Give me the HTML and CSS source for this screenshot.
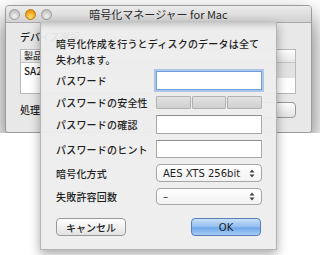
FILE: index.html
```html
<!DOCTYPE html>
<html lang="ja">
  <head>
    <meta charset="UTF-8" />
    <title>暗号化マネージャー for Mac</title>
    <link rel="stylesheet" href="styles.css">
  </head>
  <body>
    <div class="window">
      <div class="titlebar">
        <div class="lights">
          <span class="light"></span>
          <span class="light min"></span>
          <span class="light"></span>
        </div>
        <div class="title">暗号化マネージャー for Mac</div>
      </div>
      <div class="body">
        <div class="label">デバイス選択</div>
        <div class="table">
          <div class="thead"><span>製品</span></div>
          <div class="trow"><span>SA2</span></div>
        </div>
        <div class="actions">
          <span class="label">処理</span>
          <span class="btn wide"></span>
        </div>
      </div>
    </div>

    <!-- シート -->
    <div class="sheet">
      <p class="msg">暗号化作成を行うとディスクのデータは全て失われます。</p>
      <div class="form">
        <label>パスワード</label>
        <div class="field focus"></div>
        <label>パスワードの安全性</label>
        <div class="meter"><span></span><span></span><span></span></div>
        <label>パスワードの確認</label>
        <div class="field"></div>
        <label>パスワードのヒント</label>
        <div class="field"></div>
        <label>暗号化方式</label>
        <div class="select"><b>AES XTS 256bit</b><svg width="6" height="9" viewBox="0 0 6 9"><path d="M3 0.5L5.5 3.5H0.5Z M3 8.5L5.5 5.5H0.5Z" fill="#444"/></svg></div>
        <label>失敗許容回数</label>
        <div class="select"><b>–</b><svg width="6" height="9" viewBox="0 0 6 9"><path d="M3 0.5L5.5 3.5H0.5Z M3 8.5L5.5 5.5H0.5Z" fill="#444"/></svg></div>
      </div>
      <div class="buttons">
        <span class="btn">キャンセル</span>
        <span class="btn ok">OK</span>
      </div>
    </div>
  </body>
</html>
```

FILE: styles.css
```css
html,
body {
  margin: 0;
  background: #fff;
  font-family: "Noto Sans CJK JP", "Liberation Sans", sans-serif;
  color: #1e1e1e;
  overflow: hidden;
}

.window {
  margin: 5px 0 0 5px;
  width: 307px;
  height: 128px;
  border: 1px solid #9c9c9c;
  border-radius: 4px 4px 3px 3px;
  box-sizing: border-box;
  background: #e8e8e8;
  box-shadow: 0 12px 24px rgba(0, 0, 0, 0.6);
  overflow: hidden;
}

.titlebar {
  height: 16px;
  display: flex;
  align-items: center;
  position: relative;
  background: linear-gradient(#ececec, #d2d2d2);
  border-bottom: 1px solid #a8a8a8;
}

.lights {
  display: flex;
  gap: 5px;
  padding-left: 3px;
}

.light {
  width: 11px;
  height: 11px;
  border-radius: 50%;
  box-sizing: border-box;
  border: 1px solid #9a9a9a;
  background: radial-gradient(circle at 50% 70%, #f4f4f4, #c4c4c4 70%);
}

.light.min {
  border-color: #c07a10;
  background: radial-gradient(circle at 50% 75%, #ffe27a, #f0a820 55%, #d88a10);
}

.title {
  position: absolute;
  left: 0;
  right: 0;
  text-align: center;
  font-size: 11px;
  line-height: 16px;
  color: #2a2a2a;
}

.body {
  padding: 7px 15px 0 14px;
  font-size: 10px;
  font-weight: 500;
}

.label {
  line-height: 14px;
}

.table {
  margin-top: 5px;
  height: 45px;
  background: #fff;
  border: 1px solid #b8b8b8;
  box-sizing: border-box;
}

.thead {
  display: flex;
  height: 12px;
  line-height: 12px;
  background: linear-gradient(#fff, #e6e6e6);
  border-bottom: 1px solid #c4c4c4;
  font-size: 9px;
  color: #333;
}

.thead span,
.trow span {
  padding-left: 3px;
  width: 150px;
}

.trow {
  display: flex;
  height: 15px;
  line-height: 15px;
  background: linear-gradient(90deg, #fff 20px, #e2e2e2 120px);
  font-size: 10px;
}

.actions {
  display: flex;
  justify-content: space-between;
  align-items: center;
  margin-top: 8px;
}

.btn {
  display: inline-flex;
  align-items: center;
  justify-content: center;
  height: 18px;
  box-sizing: border-box;
  border: 1px solid #999;
  border-radius: 4px;
  background: linear-gradient(#fff, #f0f0f0 50%, #e2e2e2);
  font-size: 10px;
  font-weight: 500;
}

.btn.wide {
  width: 80px;
  height: 16px;
}

.sheet {
  position: absolute;
  left: 40px;
  top: 22px;
  width: 237px;
  height: 228px;
  box-sizing: border-box;
  padding: 14px 15px 0 15px;
  background: rgba(237, 237, 237, 0.95);
  border: 1px solid #b4b4b4;
  border-top: none;
  box-shadow: inset 0 7px 6px -5px rgba(0, 0, 0, 0.22), 0 4px 10px rgba(0, 0, 0, 0.35);
  font-weight: 500;
}

.msg {
  margin: 0;
  font-size: 10px;
  line-height: 16px;
  letter-spacing: 0.2px;
}

.form {
  display: grid;
  grid-template-columns: 100px 106px;
  grid-template-rows: 19px 13px 19px 18px 18px 17px;
  row-gap: 6px;
  margin-top: 3px;
  font-size: 10px;
  letter-spacing: 0.2px;
}

.form label {
  align-self: center;
}

.field {
  background: #fff;
  border: 1px solid #a9a9a9;
  border-top-color: #8e8e8e;
  box-sizing: border-box;
}

.field.focus {
  border: 1px solid #6e9fdc;
  box-shadow: 0 0 0 2px rgba(120, 165, 225, 0.55);
}

.meter {
  display: flex;
  gap: 1px;
}

.meter span {
  flex: 1;
  border: 1px solid #b2b2b2;
  border-radius: 1px;
  background: linear-gradient(#e2e2e2, #cfcfcf);
}

.select {
  display: flex;
  align-items: center;
  justify-content: space-between;
  padding: 0 6px 0 6px;
  background: linear-gradient(#fff, #f2f2f2);
  border: 1px solid #a6a6a6;
  border-radius: 4px;
  font-family: "DejaVu Sans", sans-serif;
  font-size: 10px;
  letter-spacing: 0;
}

.select b {
  font-weight: normal;
}

.buttons {
  display: flex;
  justify-content: space-between;
  margin-top: 13px;
}

.buttons .btn {
  width: 70px;
}

.btn.ok {
  border-color: #5b7fb5;
  background: linear-gradient(#c9e0fa, #8fbdf0 50%, #6ea7ea 55%, #a6cdf6);
  font-family: "DejaVu Sans", sans-serif;
}
```
